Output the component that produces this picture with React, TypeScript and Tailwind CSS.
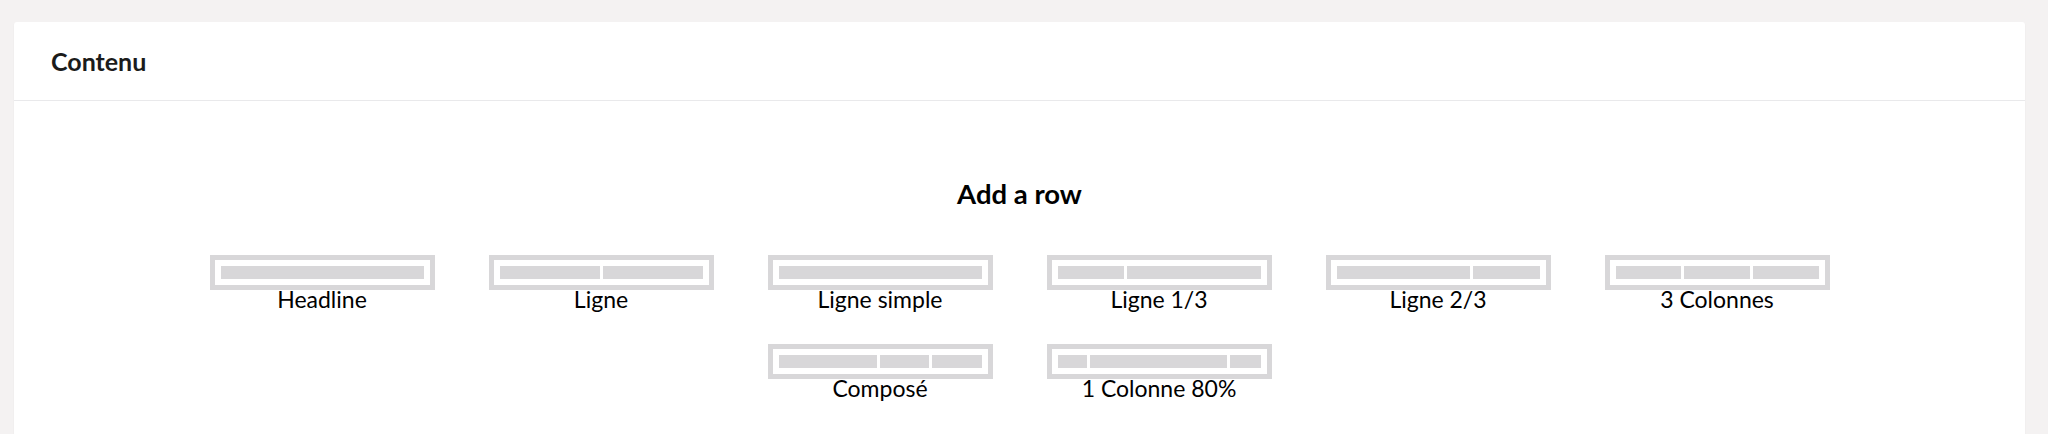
import React from "react";

type Tpl = { name: string; cols: number[] };

const templates: Tpl[] = [
  { name: "Headline", cols: [12] },
  { name: "Ligne", cols: [6, 6] },
  { name: "Ligne simple", cols: [12] },
  { name: "Ligne 1/3", cols: [4, 8] },
  { name: "Ligne 2/3", cols: [8, 4] },
  { name: "3 Colonnes", cols: [4, 4, 4] },
  { name: "Composé", cols: [6, 3, 3] },
  { name: "1 Colonne 80%", cols: [28, 132, 29] },
];

function RowTemplate({ t }: { t: Tpl }) {
  return (
    <div className="flex w-[225px] flex-col items-center">
      <div className="flex h-[35px] w-full gap-[3px] border-[5px] border-[#d8d7d9] bg-white p-[6px]">
        {t.cols.map((c, i) => (
          <div key={i} className="h-full bg-[#d8d7d9]" style={{ flexGrow: c, flexBasis: 0 }} />
        ))}
      </div>
      <div className="whitespace-nowrap pt-[1px] text-[23px] leading-[16px] text-[#000]">{t.name}</div>
    </div>
  );
}

export default function App() {
  return (
    <div
      className="min-h-[434px] bg-[#f4f2f2] pt-[22px] pl-[14px] pr-[23px]"
      style={{ fontFamily: "Lato, 'Noto Sans', sans-serif" }}
    >
      <div className="min-h-[420px] rounded-[3px] bg-white shadow-[0_1px_1px_rgba(0,0,0,0.12)]">
        <div className="flex h-[79px] items-center border-b border-[#e9e9eb] pl-[37px]">
          <h2 className="text-[25px] leading-[1.2] font-bold text-[#1b1b1b]">Contenu</h2>
        </div>
        <div className="pt-[76px]">
          <h3 className="text-center text-[27.5px] leading-[1.2] font-bold text-[#000]">Add a row</h3>
          <div className="mx-auto mt-[45px] flex max-w-[1680px] flex-wrap justify-center gap-x-[54px] gap-y-[37px]">
            {templates.map((t) => (
              <RowTemplate key={t.name} t={t} />
            ))}
          </div>
        </div>
      </div>
    </div>
  );
}
